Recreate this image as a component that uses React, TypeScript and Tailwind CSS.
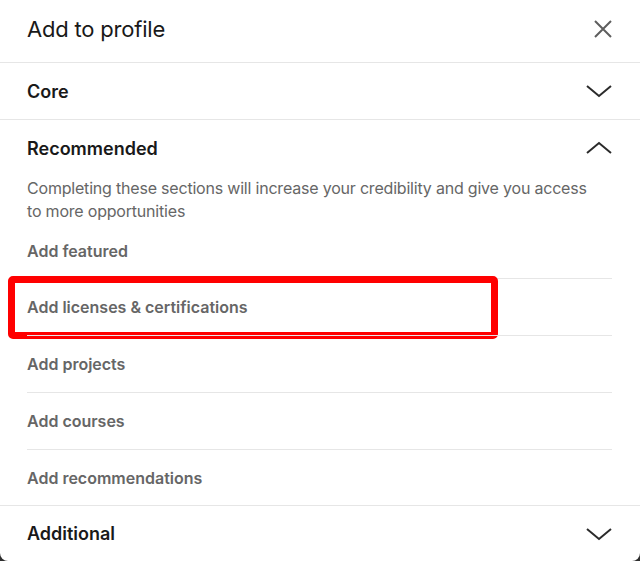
import React from "react";

const Chevron = ({ up = false }: { up?: boolean }) => (
  <svg width="26" height="26" viewBox="0 0 26 26" fill="none" className="block">
    {up ? (
      <polyline points="1,18 13,8 25,18" stroke="#2b2b2b" strokeWidth="2" strokeLinejoin="miter" />
    ) : (
      <polyline points="1,8 13,18 25,8" stroke="#2b2b2b" strokeWidth="2" strokeLinejoin="miter" />
    )}
  </svg>
);

const items = [
  "Add featured",
  "Add licenses & certifications",
  "Add projects",
  "Add courses",
  "Add recommendations",
];

export default function App() {
  return (
    <div className="w-[640px] h-[561px] bg-[#2e2e2e] overflow-hidden" style={{ fontFamily: "Inter, 'Noto Sans', sans-serif" }}>
      <div className="w-full h-full bg-white rounded-b-[8px] flex flex-col">
        <div className="h-[63px] shrink-0 flex items-center justify-between pl-[27px] pr-[27px] pb-[4px] border-b border-[#e6e6e6]">
          <h1 className="text-[22px] leading-[30px] text-[#191919] font-normal tracking-[-0.2px]">Add to profile</h1>
          <svg width="20" height="20" viewBox="0 0 20 20" className="block">
            <path d="M2 2 L18 18 M18 2 L2 18" stroke="#5e5e5e" strokeWidth="2" />
          </svg>
        </div>
        <div className="h-[57px] shrink-0 flex items-center justify-between pl-[27px] pr-[28px] border-b border-[#e6e6e6]">
          <span className="text-[18px] font-semibold text-[#191919]">Core</span>
          <Chevron />
        </div>
        <div className="shrink-0 border-b border-[#e6e6e6]">
          <div className="h-[56px] flex items-center justify-between pl-[27px] pr-[28px]">
            <span className="text-[18px] font-semibold text-[#191919]">Recommended</span>
            <Chevron up />
          </div>
          <p className="pl-[27px] pr-[40px] pt-[1px] text-[16px] leading-[23px] text-[#666666] tracking-[-0.2px]">
            Completing these sections will increase your credibility and give you access to more opportunities
          </p>
          <div className="px-[27px] pr-[28px]">
            {items.map((t, i) => (
              <div
                key={t}
                className={`relative flex items-center ${i === 0 ? "h-[55px]" : i === items.length - 1 ? "h-[56px] border-t border-[#e6e6e6]" : "h-[57px] border-t border-[#e6e6e6]"}`}
              >
                <span className="text-[16px] font-semibold text-[#666666]">{t}</span>
                {i === 1 && (
                  <div className="absolute left-[-19px] top-[-3px] w-[490px] h-[63px] border-[7px] border-[#ff0000] rounded-[5px]" />
                )}
              </div>
            ))}
          </div>
        </div>
        <div className="flex-1 flex items-center justify-between pl-[27px] pr-[28px]">
          <span className="text-[18px] font-semibold text-[#191919]">Additional</span>
          <Chevron />
        </div>
      </div>
    </div>
  );
}
